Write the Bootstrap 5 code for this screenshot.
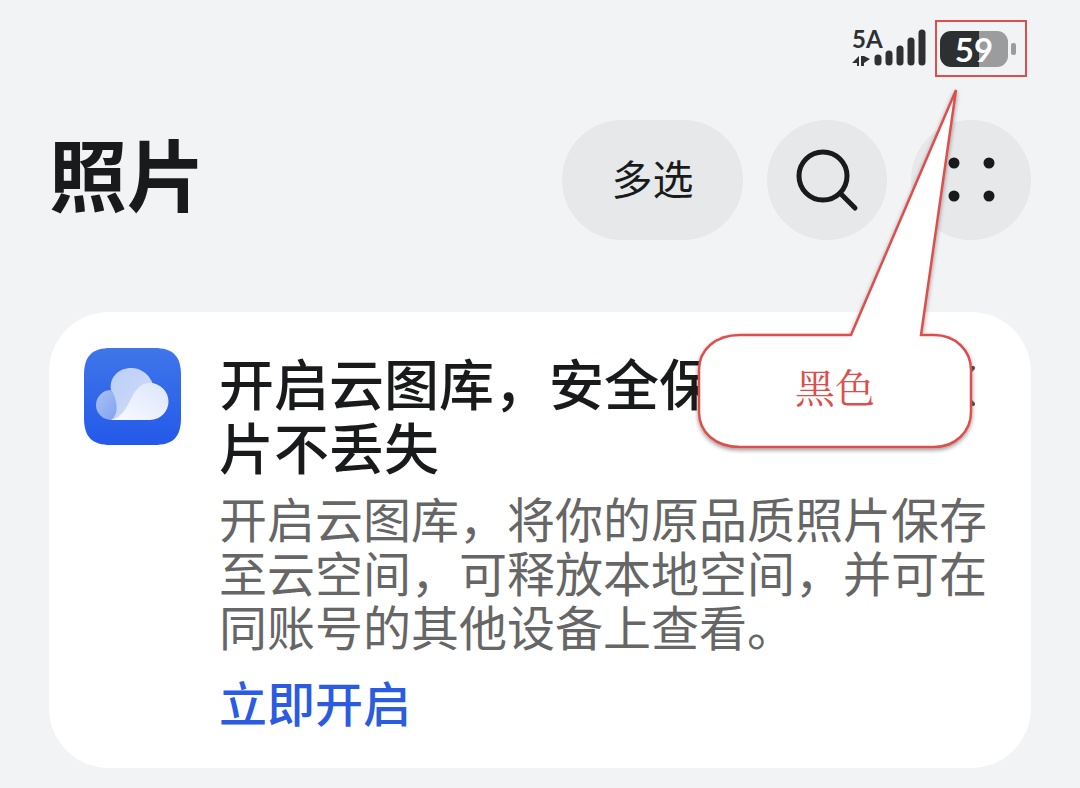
<!DOCTYPE html>
<html lang="zh-CN">
<head>
<meta charset="utf-8">
<meta name="viewport" content="width=device-width, initial-scale=1">
<title>照片</title>
<link rel="stylesheet" href="https://cdn.jsdelivr.net/npm/bootstrap@5.3.0/dist/css/bootstrap.min.css">
<style>
  body { background: #f1f3f5; color: #191a1b; font-family: "Noto Sans CJK SC", sans-serif; }
  .screen { padding: 20px 49px; }
  .status-bar { height: 57px; margin-right: 4px; margin-bottom: 43px; font-family: Lato, "Noto Sans CJK SC", sans-serif; gap: 9px; }
  .network { width: 74px; height: 40px; color: #2e3031; }
  .network-type { font-size: 24px; line-height: 20px; left: 0; top: 0; font-weight: 700; }
  .battery-frame { width: 92px; height: 57px; border: 2px solid #dc4f4c; gap: 3px; padding-left: 3px; }
  .battery-level { width: 68px; height: 36px; border-radius: 11px; background: linear-gradient(90deg, #2c3031 57%, #9b9c9e 57%); color: #fff; font-size: 33px; line-height: 36px; font-weight: 700; }
  .battery-tip { width: 5px; height: 12px; border-radius: 2px; background: #9b9c9e; }
  .page-title { font-size: 78px; line-height: 104px; font-weight: 700; }
  .tool-row { gap: 24px; }
  .tool-btn { --bs-btn-bg: #e6e8ea; --bs-btn-color: #191a1b; --bs-btn-hover-bg: #dcdfe2; --bs-btn-border-width: 0; width: 120px; height: 120px; border-radius: 60px; font-size: 41px; line-height: 60px; }
  .tool-btn.wide { width: 181px; padding: 0 0 6px; }
  .promo { margin-top: 72px; padding: 36px 35px; border-radius: 60px; gap: 38px; background: #fff; }
  .promo-title { font-size: 55px; line-height: 64px; font-weight: 500; margin: 1px 0 13px; }
  .promo-text { font-size: 48px; line-height: 54px; color: #666; margin: 0 0 18px; }
  .promo-link { font-size: 48px; line-height: 62px; font-weight: 500; color: #2a5be0; }
  .close-btn { width: 40px; height: 40px; top: 54px; right: 56px; }
  .callout { top: 84px; right: 101px; width: 284px; height: 376px; pointer-events: none; }
  .callout-text { top: 250px; left: 12px; right: 16px; height: 112px; color: #dc4f4c; font-family: "Liberation Serif", "Noto Serif CJK SC", "Noto Sans CJK SC", serif; font-weight: 400; font-size: 40px; }
</style>
</head>
<body>
<div class="screen position-relative">
  <div class="status-bar d-flex justify-content-end align-items-center">
    <div class="network position-relative">
      <span class="network-type position-absolute">5A</span>
      <svg class="d-block" width="74" height="40" viewBox="0 0 74 40" fill="currentColor" aria-hidden="true">
        <path d="M0 34 7 27v10H5v-3H0zM9 27v10h3v-3l6-4-6-3z"/>
        <path d="M26 29v4M37 25v8M48 20v13M59 12v21M70 4v29" stroke="currentColor" stroke-width="7" stroke-linecap="round"/>
      </svg>
    </div>
    <div class="battery-frame d-flex align-items-center">
      <div class="battery-level text-center">59</div>
      <div class="battery-tip"></div>
    </div>
  </div>

  <header class="d-flex align-items-start justify-content-between">
    <h1 class="page-title m-0">照片</h1>
    <div class="tool-row d-flex">
      <button type="button" class="btn tool-btn wide">多选</button>
      <button type="button" class="btn tool-btn p-0" aria-label="搜索">
        <svg class="d-block" width="120" height="120" viewBox="0 0 120 120" fill="none" stroke="#191a1b" stroke-width="5" stroke-linecap="round"><circle cx="56" cy="56" r="24"/><path d="m73 73 15 15"/></svg>
      </button>
      <button type="button" class="btn tool-btn p-0" aria-label="更多">
        <svg class="d-block" width="120" height="120" viewBox="0 0 120 120" fill="#191a1b"><circle cx="43" cy="43" r="5.500"/><circle cx="78" cy="43" r="5.500"/><circle cx="43" cy="76" r="5.500"/><circle cx="78" cy="76" r="5.500"/></svg>
      </button>
    </div>
  </header>

  <section class="promo d-flex align-items-start position-relative">
    <svg class="flex-shrink-0" width="97" height="97" viewBox="0 0 97 97" role="img" aria-label="云空间">
      <defs>
        <linearGradient id="tile" x2="0" y2="1"><stop stop-color="#3f76e9"/><stop offset="1" stop-color="#2459ea"/></linearGradient>
        <linearGradient id="puff" x2="1" y2="1"><stop stop-color="#bccff7"/><stop offset="1" stop-color="#d0dcfa"/></linearGradient>
        <linearGradient id="front" x1="1" x2="0" y2="1"><stop stop-color="#dce5fc"/><stop offset="1" stop-color="#f8faff"/></linearGradient>
        <linearGradient id="side" x2="1" y2="1"><stop stop-color="#a9c1f5"/><stop offset="1" stop-color="#7ea1f0"/></linearGradient>
      </defs>
      <path fill="url(#tile)" d="M27 0H70C89 0 97 8 97 27V70C97 89 89 97 70 97H27C8 97 0 89 0 70V27C0 8 8 0 27 0Z"/>
      <path fill="url(#side)" d="M27 42A15 15 0 0 0 27 72H32Q40 63 27 42Z"/>
      <path fill="url(#puff)" d="M27 42C25 29 35 20 47 20C57 20 65 26 69 36L50 62 27 72C36 66 33 51 27 42Z"/>
      <path fill="url(#front)" d="M27 72C49 66 45 35 66 35A18.500 18.500 0 0 1 66 72Z"/>
    </svg>
    <div class="flex-grow-1">
      <h2 class="promo-title">开启云图库，安全保<br>片不丢失</h2>
      <p class="promo-text">开启云图库，将你的原品质照片保存至云空间，可释放本地空间，并可在同账号的其他设备上查看。</p>
      <a class="promo-link d-block text-decoration-none" href="#">立即开启</a>
    </div>
    <button type="button" class="close-btn btn p-0 border-0 position-absolute" aria-label="关闭">
      <svg class="d-block" width="40" height="40" viewBox="0 0 40 40" stroke="#555" stroke-width="4" stroke-linecap="round"><path d="M2 2 38 38M38 2 2 38"/></svg>
    </button>
  </section>

  <div class="callout position-absolute">
    <svg class="d-block" width="284" height="376" viewBox="0 0 284 376" aria-hidden="true">
      <defs><filter id="shade" x="-10%" y="-10%" width="120%" height="120%"><feDropShadow dx="0" dy="2" stdDeviation="2" flood-color="#000" flood-opacity=".4"/></filter></defs>
      <path d="M45 251H156L261 6 226 251H239C260 251 276 266 276 286V328C276 348 260 363 239 363H45C20 363 4 348 4 328V286C4 266 20 251 45 251Z" fill="#fff" stroke="#dc4f4c" stroke-width="2.500" filter="url(#shade)"/>
    </svg>
    <div class="callout-text position-absolute d-flex align-items-center justify-content-center">黑色</div>
  </div>
</div>
<script src="https://cdn.jsdelivr.net/npm/bootstrap@5.3.0/dist/js/bootstrap.bundle.min.js"></script>
</body>
</html>
